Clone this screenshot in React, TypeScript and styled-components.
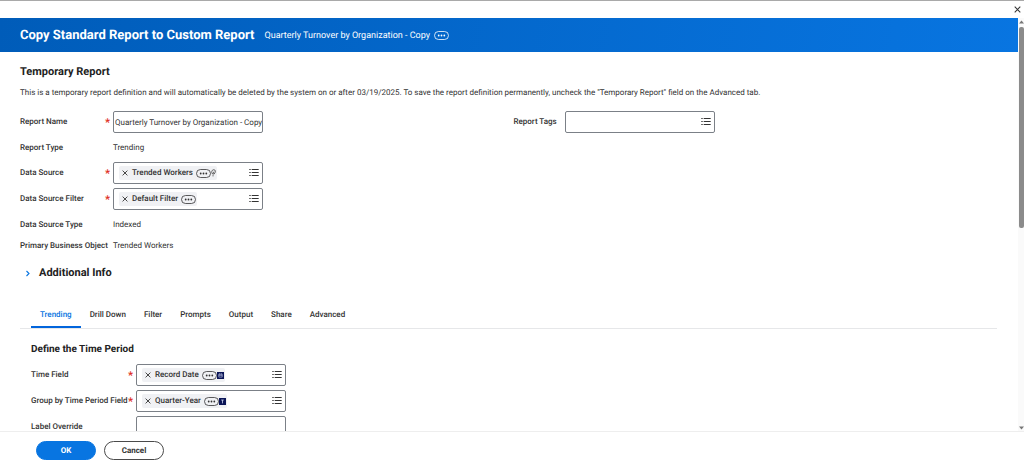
import React, { useState } from "react";
import styled, { createGlobalStyle } from "styled-components";

const GlobalStyle = createGlobalStyle`
  * { box-sizing: border-box; }
  html, body { margin: 0; padding: 0; background: #ffffff; }
  body, button, input {
    font-family: Roboto, "Liberation Sans", sans-serif;
    font-size: 8px;
    line-height: 10px;
    color: #333333;
    text-rendering: geometricPrecision;
  }
  h1, h2, h3, p { margin: 0; }
`;

const Dialog = styled.div`
  display: flex;
  flex-direction: column;
  height: 100vh;
  overflow: hidden;
  background: #ffffff;
  border-top: 1px solid #a9a9a9;
`;

const TopBar = styled.div`
  flex: none;
  display: flex;
  justify-content: flex-end;
  align-items: center;
  height: 17px;
  padding-right: 3px;
`;

const IconButton = styled.button`
  display: inline-flex;
  flex: none;
  padding: 0;
  border: 0;
  background: none;
  color: inherit;
  cursor: pointer;
`;

const Body = styled.div`
  flex: 1;
  min-height: 0;
  display: flex;
`;

const Content = styled.main`
  flex: 1;
  min-width: 0;
  overflow: hidden;
`;

const Banner = styled.header`
  display: flex;
  align-items: center;
  height: 34px;
  padding: 1px 20px 0;
  color: #ffffff;
  background: linear-gradient(100deg, #005cb9 0%, #0875e1 100%);
`;

const Title = styled.h1`
  margin-right: 10px;
  font-size: 13px;
  line-height: 16px;
  font-weight: 700;
`;

const Subtitle = styled.span`
  margin-right: 4px;
  font-size: 9px;
`;

const Page = styled.div`
  padding: 13px 21px 0 20px;
`;

const Heading = styled.h2`
  font-size: 11px;
  line-height: 14px;
  font-weight: 700;
  color: #222222;
`;

const SubHeading = styled.h3`
  font-size: 10px;
  line-height: 14px;
  font-weight: 700;
  color: #222222;
`;

const Notice = styled.p`
  padding: 9px 0 11px;
`;

const Columns = styled.div`
  display: grid;
  grid-template-columns: 1fr 1fr;
  column-gap: 10px;
`;

const Row = styled.div<{ $height: number; $label: number }>`
  display: grid;
  grid-template-columns: ${(p) => p.$label}px minmax(0, 150px);
  align-items: center;
  height: ${(p) => p.$height}px;
`;

const Label = styled.label`
  display: flex;
  justify-content: space-between;
  align-items: center;
  padding-right: 3px;
  font-weight: 500;
  white-space: nowrap;
`;

const Value = styled.span`
  font-size: 8px;
`;

const Required = styled.span`
  font-size: 11px;
  line-height: 12px;
  height: 10px;
  font-weight: 700;
  color: #de2e21;
`;

const Box = styled.div`
  display: flex;
  align-items: center;
  height: 22px;
  padding: 0 3px 0 5px;
  border: 1px solid #7b8087;
  border-radius: 2px;
  background: #ffffff;
`;

const TextInput = styled.input`
  width: 100%;
  height: 22px;
  padding: 0 0 0 1px;
  border: 1px solid #7b8087;
  border-radius: 2px;
  background: #ffffff;
  outline: none;
`;

const PromptInput = styled.input`
  flex: 1;
  min-width: 0;
  padding: 0;
  border: 0;
  background: none;
  outline: none;
`;

const Chip = styled.span`
  display: flex;
  align-items: center;
  height: 14px;
  padding: 0 1px 0 3px;
  border-radius: 2px;
  background: #f0f1f4;
  font-weight: 500;
  white-space: nowrap;
`;

const ChipText = styled.span`
  margin: 0 3px 0 4px;
`;

const Expander = styled.button`
  display: flex;
  align-items: center;
  gap: 8px;
  margin: 11px 0 0 5px;
  padding: 0;
  border: 0;
  background: none;
  font-size: 11px;
  line-height: 14px;
  font-weight: 700;
  color: #222222;
`;

const Tabs = styled.div`
  display: flex;
  margin-top: 22px;
  padding-left: 11px;
  border-bottom: 1px solid #e6e7e9;
`;

const Tab = styled.button<{ $active: boolean }>`
  height: 26px;
  padding: 2px 9px 0;
  border: 0;
  border-bottom: 2px solid ${(p) => (p.$active ? "#0265dc" : "transparent")};
  background: none;
  font-weight: 500;
  color: ${(p) => (p.$active ? "#0875e1" : "#333333")};
`;

const Panel = styled.section`
  padding: 14px 0 0 11px;
`;

const PanelRows = styled.div`
  padding-top: 5px;
`;

const Footer = styled.footer`
  flex: none;
  display: flex;
  gap: 8px;
  height: 36px;
  padding: 9px 36px 0;
  border-top: 1px solid #eeeeee;
`;

const ActionButton = styled.button<{ $primary?: boolean }>`
  width: 60px;
  height: 19px;
  padding: 0;
  border: 1px solid ${(p) => (p.$primary ? "#0875e1" : "#4a4a4a")};
  border-radius: 10px;
  background: ${(p) => (p.$primary ? "#0875e1" : "#ffffff")};
  color: ${(p) => (p.$primary ? "#ffffff" : "#333333")};
  font-weight: 700;
`;

const ScrollTrack = styled.div`
  flex: none;
  display: flex;
  flex-direction: column;
  align-items: center;
  width: 6px;
  padding: 2px 0 1px 1px;
  background: #fafafa;
`;

const ScrollThumb = styled.div`
  width: 5px;
  height: 49%;
  margin: 3px 0 auto;
  border-radius: 2px;
  background: #8b8b8b;
`;

const Cross = ({ size = 6 }: { size?: number }) => (
  <svg width={size} height={size} viewBox="0 0 6 6" aria-hidden="true">
    <path d="M.6.6l4.800 4.800M5.400.6L.6 5.400" stroke="#333" strokeWidth=".9" fill="none" />
  </svg>
);

const More = ({ color = "#333" }: { color?: string }) => (
  <svg width="15" height="9" viewBox="0 0 15 9" aria-hidden="true">
    <rect x=".5" y=".5" width="14" height="8" rx="4" fill="none" stroke={color} strokeWidth=".8" />
    <g fill={color}>
      <circle cx="4.7" cy="4.5" r=".9" />
      <circle cx="7.5" cy="4.5" r=".9" />
      <circle cx="10.3" cy="4.5" r=".9" />
    </g>
  </svg>
);

const ListIcon = () => (
  <svg width="10" height="8" viewBox="0 0 10 8" aria-hidden="true">
    <path d="M.3.5h1.400M.3 3.500h1.400M.3 6.500h1.400M2.700.5H9.700M2.700 3.500H9.700M2.700 6.500H9.700" stroke="#333" strokeWidth="1" fill="none" />
  </svg>
);

const Bulb = () => (
  <svg width="5" height="8" viewBox="0 0 5 8" aria-hidden="true">
    <path d="M1.500 5C.2 3.400.5.900 2.700.7c2.100 0 2.200 2.200.5 4.300zM1.400 6.800h1.300M2.200 4.600l.7-1.900" stroke="#444" strokeWidth=".8" fill="none" />
  </svg>
);

const DateBadge = () => (
  <svg width="7" height="7" viewBox="0 0 7 7" aria-hidden="true">
    <rect width="7" height="7" fill="#0b1557" />
    <path d="M1.800 2.200h3.400v2.900H1.800zM1.800 3.300h3.400M2.600 1.400v.8M4.400 1.400v.8" stroke="#cfd5f0" strokeWidth=".6" fill="none" />
  </svg>
);

const TextBadge = () => (
  <svg width="7" height="7" viewBox="0 0 7 7" aria-hidden="true">
    <rect width="7" height="7" fill="#0b1557" />
    <path d="M2.200 2h2.600M3.500 2v3.400" stroke="#cfd5f0" strokeWidth=".8" fill="none" />
  </svg>
);

const Triangle = ({ down = false }: { down?: boolean }) => (
  <svg width="5" height="4" viewBox="0 0 5 4" aria-hidden="true">
    <path d={down ? "M0 .5h5L2.500 3.500z" : "M0 3.500h5L2.500.5z"} fill="#777" />
  </svg>
);

interface RowProps {
  id: string;
  label: string;
  labelWidth: number;
  required?: boolean;
  height?: number;
  children: React.ReactNode;
}

const FieldRow = ({ id, label, labelWidth, required, height = 26, children }: RowProps) => (
  <Row $height={height} $label={labelWidth}>
    <Label htmlFor={id}>
      {label}
      {required && <Required>*</Required>}
    </Label>
    {children}
  </Row>
);

const ValueRow = ({ label, value, height = 25 }: { label: string; value: string; height?: number }) => (
  <Row $height={height} $label={93}>
    <Label as="span">{label}</Label>
    <Value>{value}</Value>
  </Row>
);

const Prompt = ({ id, chip, badge }: { id: string; chip?: string; badge?: React.ReactNode }) => (
  <Box>
    {chip && (
      <Chip>
        <IconButton aria-label={`Remove ${chip}`}>
          <Cross />
        </IconButton>
        <ChipText>{chip}</ChipText>
        <IconButton aria-label={`Related actions for ${chip}`}>
          <More />
        </IconButton>
        {badge}
      </Chip>
    )}
    <PromptInput id={id} />
    <IconButton aria-label="Show options">
      <ListIcon />
    </IconButton>
  </Box>
);

const tabs = ["Trending", "Drill Down", "Filter", "Prompts", "Output", "Share", "Advanced"];

export default function App() {
  const [active, setActive] = useState("Trending");
  return (
    <Dialog role="dialog" aria-labelledby="title">
      <GlobalStyle />
      <TopBar>
        <IconButton aria-label="Close">
          <Cross size={7} />
        </IconButton>
      </TopBar>
      <Body>
        <Content>
          <Banner>
            <Title id="title">Copy Standard Report to Custom Report</Title>
            <Subtitle>Quarterly Turnover by Organization - Copy</Subtitle>
            <IconButton aria-label="Related actions">
              <More color="#fff" />
            </IconButton>
          </Banner>
          <Page>
            <Heading>Temporary Report</Heading>
            <Notice>
              This is a temporary report definition and will automatically be deleted by the system on or after
              03/19/2025. To save the report definition permanently, uncheck the "Temporary Report" field on the
              Advanced tab.
            </Notice>
            <Columns>
              <div>
                <FieldRow id="name" label="Report Name" labelWidth={93} required>
                  <TextInput id="name" defaultValue="Quarterly Turnover by Organization - Copy" />
                </FieldRow>
                <ValueRow label="Report Type" value="Trending" />
                <FieldRow id="source" label="Data Source" labelWidth={93} required>
                  <Prompt id="source" chip="Trended Workers" badge={<Bulb />} />
                </FieldRow>
                <FieldRow id="source-filter" label="Data Source Filter" labelWidth={93} required>
                  <Prompt id="source-filter" chip="Default Filter" />
                </FieldRow>
                <ValueRow label="Data Source Type" value="Indexed" />
                <ValueRow label="Primary Business Object" value="Trended Workers" height={18} />
              </div>
              <div>
                <FieldRow id="tags" label="Report Tags" labelWidth={51}>
                  <Prompt id="tags" />
                </FieldRow>
              </div>
            </Columns>
            <Expander aria-expanded="false">
              <svg width="6" height="7" viewBox="0 0 6 7" aria-hidden="true">
                <path d="M1.500 1l2.500 2.500L1.500 6" stroke="#0875e1" strokeWidth="1.100" fill="none" />
              </svg>
              Additional Info
            </Expander>
            <Tabs role="tablist">
              {tabs.map((tab) => (
                <Tab
                  key={tab}
                  role="tab"
                  aria-selected={tab === active}
                  $active={tab === active}
                  onClick={() => setActive(tab)}
                >
                  {tab}
                </Tab>
              ))}
            </Tabs>
            <Panel>
              <SubHeading>Define the Time Period</SubHeading>
              <PanelRows>
                <FieldRow id="time" label="Time Field" labelWidth={105} required>
                  <Prompt id="time" chip="Record Date" badge={<DateBadge />} />
                </FieldRow>
                <FieldRow id="group" label="Group by Time Period Field" labelWidth={105} required>
                  <Prompt id="group" chip="Quarter-Year" badge={<TextBadge />} />
                </FieldRow>
                <FieldRow id="override" label="Label Override" labelWidth={105}>
                  <TextInput id="override" />
                </FieldRow>
              </PanelRows>
            </Panel>
          </Page>
        </Content>
        <ScrollTrack aria-hidden="true">
          <Triangle />
          <ScrollThumb />
          <Triangle down />
        </ScrollTrack>
      </Body>
      <Footer>
        <ActionButton $primary>OK</ActionButton>
        <ActionButton>Cancel</ActionButton>
      </Footer>
    </Dialog>
  );
}
